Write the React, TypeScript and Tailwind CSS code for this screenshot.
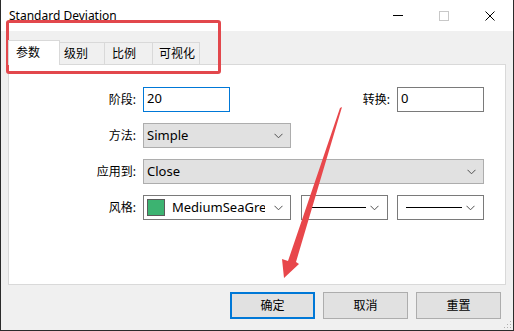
import React from "react";

const font = "font-['Noto_Sans','Noto_Sans_CJK_SC',sans-serif]";

function Chevron() {
  return (
    <svg width="9" height="6" viewBox="0 0 9 6" className="shrink-0">
      <polyline points="0.5,0.8 4.5,4.8 8.5,0.8" fill="none" stroke="#505050" strokeWidth="1" />
    </svg>
  );
}

function Label({ text }: { text: string }) {
  return <div className="w-[128px] shrink-0 pr-[1px] text-right text-[12px] text-black">{text}</div>;
}

function LineSelect() {
  return (
    <div className="flex h-[25px] w-[87px] items-center border border-[#7a7a7a] bg-white pl-[8px] pr-[8px]">
      <div className="h-[1px] w-[56px] bg-black" />
      <div className="flex-1" />
      <Chevron />
    </div>
  );
}

export default function App() {
  return (
    <div className={`relative flex h-[331px] w-[514px] flex-col overflow-hidden border-b border-l border-r border-[#2b2b2b] bg-[#f0f0f0] ${font}`}>
      {/* title bar */}
      <div className="flex h-[31px] shrink-0 items-center bg-white">
        <div className="pl-[8px] text-[12px] text-black">Standard Deviation</div>
        <div className="flex-1" />
        <div className="flex items-center">
          <div className="flex w-[46px] justify-center">
            <div className="h-[1px] w-[10px] bg-black" />
          </div>
          <div className="flex w-[46px] justify-center">
            <div className="h-[10px] w-[10px] border border-[#c8c8c8]" />
          </div>
          <div className="flex w-[46px] justify-center">
            <svg width="10" height="10" viewBox="0 0 10 10">
              <path d="M0.5 0.5L9.5 9.5M9.5 0.5L0.5 9.5" stroke="#000" strokeWidth="1" />
            </svg>
          </div>
        </div>
      </div>

      {/* tabs */}
      <div className="flex h-[33px] items-end pl-[7px]">
        <div className="relative z-10 -mb-[1px] flex h-[25px] w-[52px] items-center border border-b-0 border-[#d9d9d9] bg-white pl-[7px] text-[12px] text-black">
          参数
        </div>
        <div className="flex h-[22px] w-[45px] items-center border border-l-0 border-b-0 border-[#d9d9d9] pl-[4px] text-[12px] text-black">
          级别
        </div>
        <div className="flex h-[22px] w-[48px] items-center border border-l-0 border-b-0 border-[#d9d9d9] pl-[7px] text-[12px] text-black">
          比例
        </div>
        <div className="flex h-[22px] w-[47px] items-center border border-l-0 border-b-0 border-[#d9d9d9] pl-[6px] text-[12px] text-black">
          可视化
        </div>
      </div>

      {/* panel */}
      <div className="mx-[7px] flex h-[221px] flex-col gap-[11px] border border-[#d9d9d9] bg-white pt-[22px] text-[12px]">
        <div className="flex h-[25px] items-center">
          <Label text="阶段:" />
          <div className="ml-[6px] flex h-[25px] w-[87px] items-center border border-[#0078d7] pl-[3px] pb-[2px] text-[13px]">20</div>
          <div className="flex-1" />
          <div className="mr-[7px] text-[12px]">转换:</div>
          <div className="flex h-[25px] w-[87px] items-center border border-[#7a7a7a] pl-[3px] pb-[2px] text-[13px]">0</div>
          <div className="w-[21px]" />
        </div>
        <div className="flex h-[25px] items-center">
          <Label text="方法:" />
          <div className="ml-[6px] flex h-[25px] w-[148px] items-center border border-[#adadad] bg-[#e1e1e1] pl-[3px] pr-[7px] text-[13px]">
            <span className="flex-1">Simple</span>
            <Chevron />
          </div>
        </div>
        <div className="flex h-[25px] items-center">
          <Label text="应用到:" />
          <div className="ml-[6px] flex h-[25px] w-[341px] items-center border border-[#adadad] bg-[#e1e1e1] pl-[3px] pr-[7px] text-[13px]">
            <span className="flex-1">Close</span>
            <Chevron />
          </div>
        </div>
        <div className="flex h-[25px] items-center">
          <Label text="风格:" />
          <div className="ml-[6px] flex h-[25px] w-[148px] items-center border border-[#7a7a7a] bg-white pl-[3px] pr-[7px]">
            <div className="h-[17px] w-[18px] shrink-0 border border-[#5a5a5a] bg-[#3cb371]" />
            <span className="ml-[7px] w-[93px] overflow-hidden whitespace-nowrap text-[13px]">MediumSeaGreen</span>
            <div className="flex-1" />
            <Chevron />
          </div>
          <div className="ml-[10px]">
            <LineSelect />
          </div>
          <div className="ml-[9px]">
            <LineSelect />
          </div>
        </div>
      </div>

      {/* buttons */}
      <div className="flex justify-end gap-[8px] pr-[12px] pt-[7px]">
        <div className="flex h-[27px] w-[85px] items-center justify-center border-2 border-[#0078d7] bg-[#e1e1e1] text-[12px]">确定</div>
        <div className="flex h-[27px] w-[85px] items-center justify-center border border-[#adadad] bg-[#e1e1e1] text-[12px]">取消</div>
        <div className="flex h-[27px] w-[85px] items-center justify-center border border-[#adadad] bg-[#e1e1e1] text-[12px]">重置</div>
      </div>

      {/* resize grip */}
      <svg className="absolute bottom-[1px] right-[1px]" width="8" height="8" viewBox="0 0 8 8">
        <rect x="6" y="0" width="1" height="1" fill="#b0b0b0" />
        <rect x="3" y="3" width="1" height="1" fill="#b0b0b0" />
        <rect x="6" y="3" width="1" height="1" fill="#b0b0b0" />
        <rect x="0" y="6" width="1" height="1" fill="#b0b0b0" />
        <rect x="3" y="6" width="1" height="1" fill="#b0b0b0" />
        <rect x="6" y="6" width="1" height="1" fill="#b0b0b0" />
      </svg>

      {/* red highlight box */}
      <div className="absolute left-[5px] top-[20px] h-[54px] w-[215px] rounded-[3px] border-[3px] border-[#e2474c]" />

      {/* red arrow */}
      <svg className="absolute left-0 top-0" width="514" height="331" viewBox="0 0 514 331">
        <polygon
          points="341,107 295,262 298,264 283,278 281,259 287,261 339,108"
          fill="#e8474b"
        />
      </svg>
    </div>
  );
}
